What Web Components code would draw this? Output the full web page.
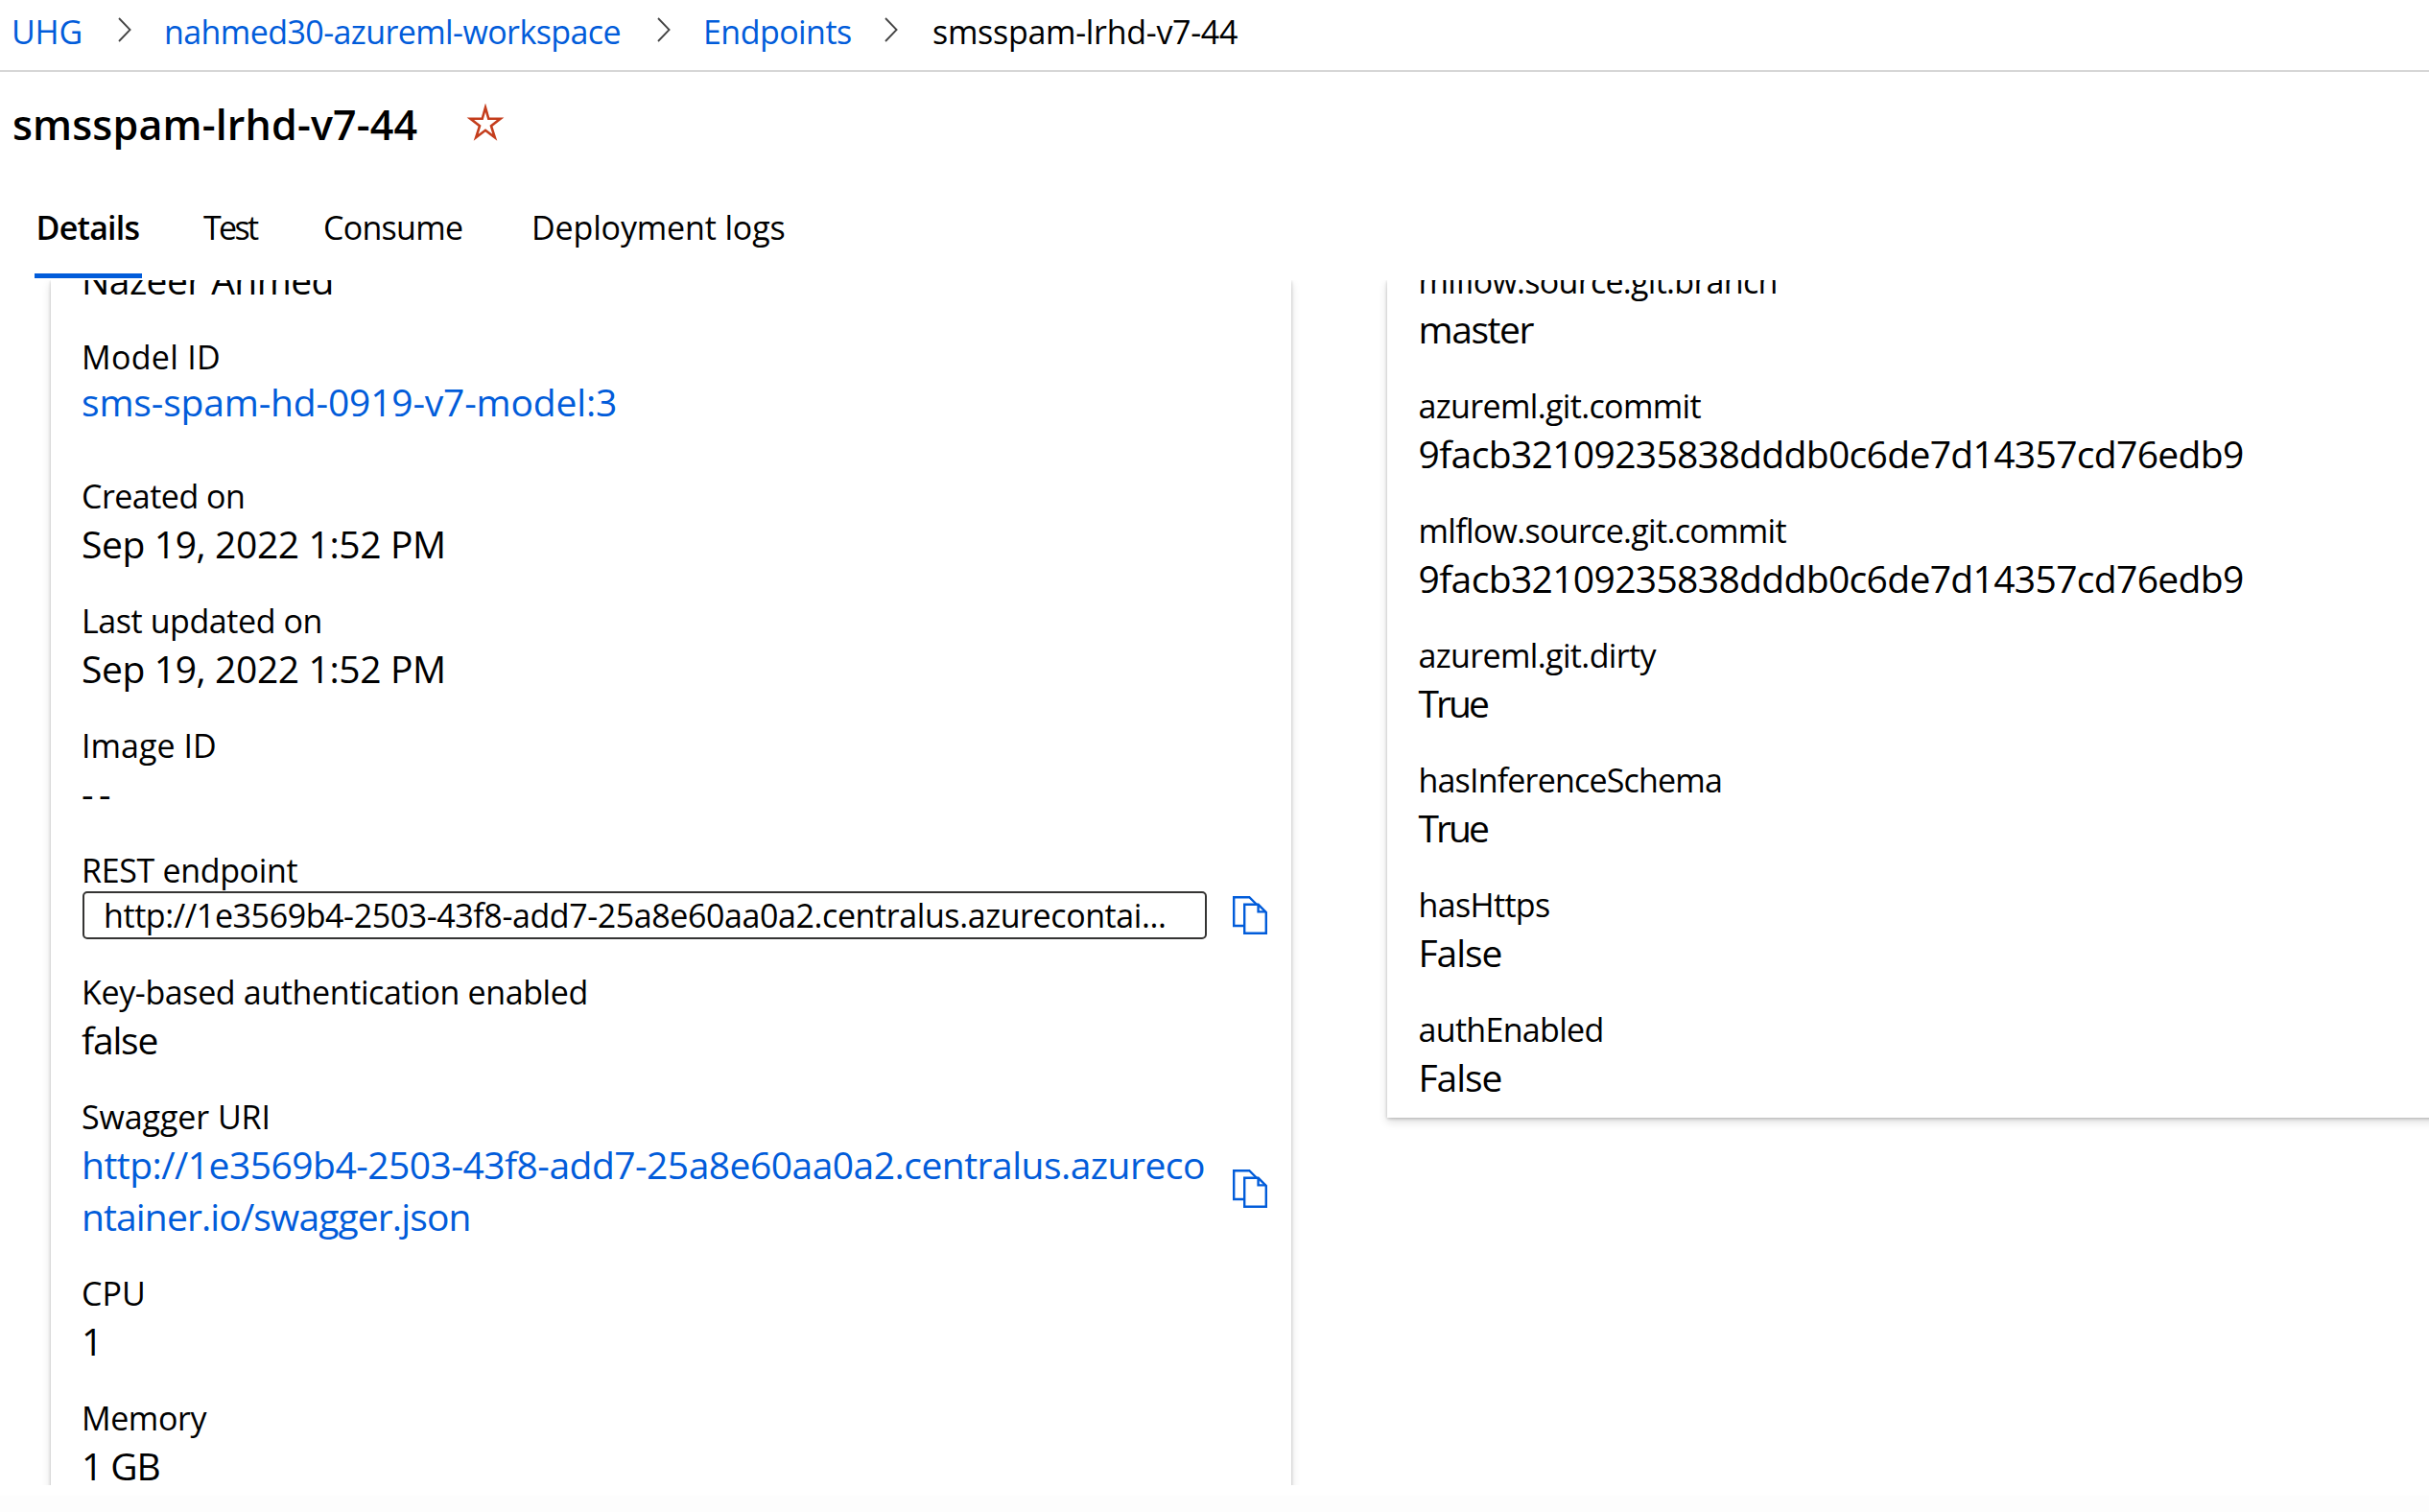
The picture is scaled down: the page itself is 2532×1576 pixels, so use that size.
<!DOCTYPE html>
<html lang="en">
<head>
<meta charset="utf-8">
<title>smsspam-lrhd-v7-44</title>
<style>
html,body{margin:0;height:100%;overflow:hidden;background:#fff}
body{font-family:"Open Sans","Noto Sans",sans-serif;color:#000;--link:#015cda}
</style>
</head>
<body>
<endpoint-page></endpoint-page>
<script>
const pen = document.createElement('canvas').getContext('2d');
const define = (name, html, setup) => customElements.define(name, class extends HTMLElement {
  connectedCallback() {
    if (this.shadowRoot) return;
    const root = this.attachShadow({mode: 'open'});
    const t = document.createElement('template');
    t.innerHTML = typeof html === 'function' ? html(this) : html;
    root.append(t.content.cloneNode(true));
    if (setup) setup(this, root);
  }
});

/* Text tracked so that its ink spans the width given in "w". */
define('fit-text', `<style>:host{display:block;white-space:pre}</style><slot></slot>`, el => {
  const w = parseFloat(el.getAttribute('w'));
  const s = el.textContent;
  if (!w || s.length < 2) return;
  const cs = getComputedStyle(el);
  pen.font = `${cs.fontWeight} ${cs.fontSize} ${cs.fontFamily}`;
  const m = pen.measureText(s);
  const ink = m.actualBoundingBoxRight + m.actualBoundingBoxLeft;
  el.style.letterSpacing = ((w - ink) / (s.length - 1)).toFixed(3) + 'px';
});

define('chevron-icon', `<style>:host{display:block;width:14px;height:26px}svg{display:block}</style>
<svg width="14" height="26" viewBox="0 0 14 26"><path d="M1 1L12.6 13L1 25" fill="none" stroke="#444" stroke-width="1.8"/></svg>`);

define('star-icon', `<style>:host{display:block;width:40px;height:40px}svg{display:block}</style>
<svg width="40" height="40" viewBox="0 0 40 40"><path d="M20 4.2L23.3 15.8H35.6L26 23.3L29.8 35.3L20 27.8L10.2 35.3L14 23.3L4.4 15.8H16.7Z" fill="none" stroke="#c43d1c" stroke-width="2.6"/></svg>`);

define('copy-icon', `<style>:host{display:block;width:36px;height:40px;flex:none}svg{display:block}</style>
<svg width="36" height="40" viewBox="0 0 36 40" fill="none" stroke="#015cda" stroke-width="2.4"><path d="M11.5 31H1.2V1.2H17.3L25.2 9"/><path d="M12.2 8.8H26.6L34.8 17V38.8H12.2Z"/><path d="M26.6 8.8V16.4H34.8"/></svg>`);

define('bread-crumbs', `<style>
:host{display:flex;box-sizing:border-box;height:75px;border-bottom:2px solid #d6d6d6;font-size:34px;line-height:46px;padding:9px 0 0 12px}
.l{color:var(--link)}
div{box-sizing:border-box;padding-top:1px}
.a{width:111px}.b{width:514px}.c{width:189px}
chevron-icon{margin-top:9px}
.g1{margin-right:34px}.g2{margin-right:34px}.g3{margin-right:36px}
</style>
<div class="a l"><fit-text w="69.5">UHG</fit-text></div><chevron-icon class="g1"></chevron-icon>
<div class="b l"><fit-text w="473.5">nahmed30-azureml-workspace</fit-text></div><chevron-icon class="g2"></chevron-icon>
<div class="c l"><fit-text w="151">Endpoints</fit-text></div><chevron-icon class="g3"></chevron-icon>
<div><fit-text w="317">smsspam-lrhd-v7-44</fit-text></div>`);

define('page-title', `<style>
:host{display:flex;height:110px;padding:26px 0 0 13px;box-sizing:border-box;font-size:43px;font-weight:600;line-height:58px}
.t{width:473px}star-icon{margin-top:6.5px}
</style><div class="t"><fit-text w="419.5">smsspam-lrhd-v7-44</fit-text></div><star-icon></star-icon>`);

define('tab-item', `<style>
:host{display:flex;flex-direction:column;height:105px;box-sizing:border-box;padding-top:29px;font-size:34px;line-height:46px;border-bottom:5px solid transparent}
:host([active]){font-weight:600;border-bottom-color:var(--link)}
</style><slot></slot>`);

define('tab-bar', `<style>
:host{display:flex;padding-left:36px;height:107px}
tab-item{flex:none}
.a{width:112px;margin-right:64px;text-indent:1.5px}.b{width:125px}.c{width:217px}
</style>
<tab-item class="a" active><fit-text w="105">Details</fit-text></tab-item>
<tab-item class="b"><fit-text w="58">Test</fit-text></tab-item>
<tab-item class="c"><fit-text w="143">Consume</fit-text></tab-item>
<tab-item><fit-text w="260.5">Deployment logs</fit-text></tab-item>`);

define('info-card', `<style>
:host{display:block;box-sizing:border-box;background:#fff;box-shadow:0 4px 9px rgba(0,0,0,.15),0 1px 3px rgba(0,0,0,.22)}
</style><slot></slot>`);

/* A label over its value. */
define('info-field', el => `<style>
:host{display:block;margin-bottom:28.7px}
.label{font-size:34px;line-height:50px;height:48px}
.value{font-size:39px;line-height:53.3px}
:host([link]) .value{color:var(--link)}
</style>
${el.getAttribute('label') ? `<div class="label"><fit-text w="${el.getAttribute('lw')}">${el.getAttribute('label')}</fit-text></div>` : ''}
<div class="value"><slot></slot></div>`);

define('url-box', `<style>
:host{display:flex;align-items:center;box-sizing:border-box;width:1172px;height:49.5px;border:2px solid #353433;border-radius:5px;padding:1px 0 0 20px;font-size:34px;line-height:46px}
</style><slot></slot>`);

define('endpoint-page', `<style>
:host{display:flex;flex-direction:column;height:1576px;width:2532px;overflow:hidden;background:#fff}
.view{display:flex;align-items:flex-start;height:1256px;flex:none;overflow:hidden;padding-left:53px;box-sizing:border-box}
.foot{height:17px;margin-top:11px;background:#fdfdfd;flex:none}
.left{width:1293px;height:1400px;padding-left:32px;margin-right:99.5px;flex:none}
.right{width:1180px;height:873px;padding-left:33px;flex:none}
.lc{margin-top:-27px}.rc{margin-top:-23.8px}
.model{margin-bottom:47.3px}
.model fit-text{margin-top:-3.4px;margin-bottom:3.4px}
.row{display:flex}
.rest{margin-bottom:30.7px}
.rest .row{margin:-1px 0 0 1px}
.rest copy-icon{margin:4.5px 0 0 27px}
.sw .lines{width:1172px}
.sw copy-icon{margin:31.5px 0 0 28px}
</style>
<bread-crumbs></bread-crumbs>
<page-title></page-title>
<tab-bar></tab-bar>
<div class="view">
<info-card class="left"><div class="lc">
<info-field><fit-text w="257.5">Nazeer Ahmed</fit-text></info-field>
<info-field class="model" link label="Model ID" lw="140"><fit-text w="555">sms-spam-hd-0919-v7-model:3</fit-text></info-field>
<info-field label="Created on" lw="167"><fit-text w="375">Sep 19, 2022 1:52 PM</fit-text></info-field>
<info-field label="Last updated on" lw="246.5"><fit-text w="375">Sep 19, 2022 1:52 PM</fit-text></info-field>
<info-field label="Image ID" lw="136"><fit-text w="28">--</fit-text></info-field>
<info-field class="rest" label="REST endpoint" lw="222.5"><div class="row"><url-box><fit-text w="1104">http://1e3569b4-2503-43f8-add7-25a8e60aa0a2.centralus.azurecontai...</fit-text></url-box><copy-icon></copy-icon></div></info-field>
<info-field label="Key-based authentication enabled" lw="522.5"><fit-text w="78.5">false</fit-text></info-field>
<info-field class="sw" link label="Swagger URI" lw="193.5"><div class="row"><div class="lines"><fit-text w="1167">http://1e3569b4-2503-43f8-add7-25a8e60aa0a2.centralus.azureco</fit-text><fit-text w="400.5">ntainer.io/swagger.json</fit-text></div><copy-icon></copy-icon></div></info-field>
<info-field label="CPU" lw="62"><fit-text>1</fit-text></info-field>
<info-field label="Memory" lw="128.5"><fit-text w="78.5">1 GB</fit-text></info-field>
</div></info-card>
<info-card class="right"><div class="rc">
<info-field label="mlflow.source.git.branch" lw="371"><fit-text w="118">master</fit-text></info-field>
<info-field label="azureml.git.commit" lw="294"><fit-text w="858.5">9facb32109235838dddb0c6de7d14357cd76edb9</fit-text></info-field>
<info-field label="mlflow.source.git.commit" lw="382"><fit-text w="858.5">9facb32109235838dddb0c6de7d14357cd76edb9</fit-text></info-field>
<info-field label="azureml.git.dirty" lw="248"><fit-text w="72.5">True</fit-text></info-field>
<info-field label="hasInferenceSchema" lw="313.5"><fit-text w="72.5">True</fit-text></info-field>
<info-field label="hasHttps" lw="134.5"><fit-text w="83">False</fit-text></info-field>
<info-field label="authEnabled" lw="190"><fit-text w="83">False</fit-text></info-field>
</div></info-card>
</div>
<div class="foot"></div>`);
</script>
</body>
</html>
